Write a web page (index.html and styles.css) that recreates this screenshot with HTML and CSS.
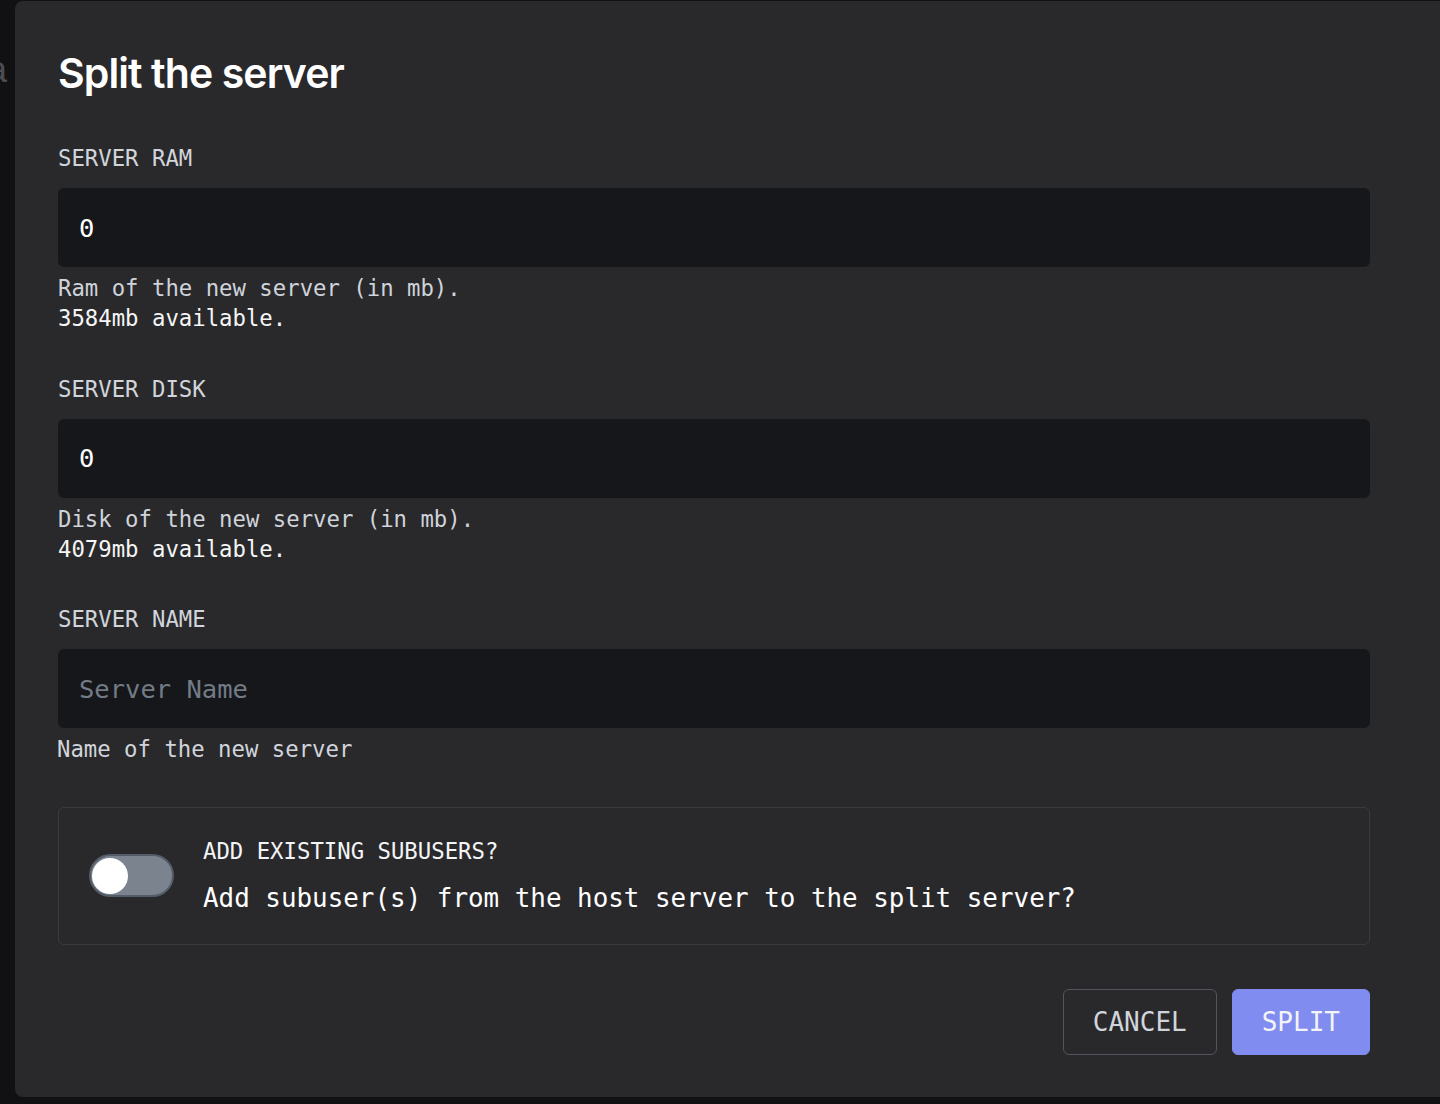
FILE: index.html
```html
<!DOCTYPE html>
<html lang="en">
<head>
<meta charset="utf-8">
<title>Split the server</title>
<link rel="stylesheet" href="styles.css">
</head>
<body>
<div class="backdrop-text">a</div>
<div class="modal">
  <div class="content">
    <h1 class="title">Split the server</h1>
    <div class="fields">
      <div class="field">
        <label class="label">SERVER RAM</label>
        <div class="input"><span class="value">0</span></div>
        <div class="help">
          <div class="help-line">Ram of the new server (in mb).</div>
          <div class="help-line strong">3584mb available.</div>
        </div>
      </div>
      <div class="field">
        <label class="label">SERVER DISK</label>
        <div class="input"><span class="value">0</span></div>
        <div class="help">
          <div class="help-line">Disk of the new server (in mb).</div>
          <div class="help-line strong">4079mb available.</div>
        </div>
      </div>
      <div class="field">
        <label class="label">SERVER NAME</label>
        <div class="input"><span class="placeholder">Server Name</span></div>
        <div class="help">
          <div class="help-line name">Name of the new server</div>
        </div>
      </div>
    </div>
    <div class="switch-box">
      <div class="toggle"><div class="knob"></div></div>
      <div class="switch-text">
        <div class="switch-title">ADD EXISTING SUBUSERS?</div>
        <div class="switch-desc">Add subuser(s) from the host server to the split server?</div>
      </div>
    </div>
    <div class="actions">
      <button class="btn btn-cancel">CANCEL</button>
      <button class="btn btn-split">SPLIT</button>
    </div>
  </div>
</div>
</body>
</html>
```
FILE: styles.css
```css
html, body {
  margin: 0;
  padding: 0;
}
body {
  background: #111113;
  overflow: hidden;
  height: 1104px;
  position: relative;
  font-family: "DejaVu Sans Mono", "Liberation Mono", monospace;
}
.backdrop-text {
  position: absolute;
  left: -13px;
  top: 50px;
  font-family: "Liberation Sans", Arial, sans-serif;
  font-size: 36px;
  line-height: 40px;
  color: #4d4d51;
}
.modal {
  position: relative;
  margin: 1px 0 0 15px;
  width: 1440px;
  box-sizing: border-box;
  background: #29292c;
  border-radius: 8px;
  padding: 48px 43px 42px;
}
.content {
  width: 1312px;
}
.title {
  margin: 0 0 46.4px;
  font-family: Inter, "Liberation Sans", sans-serif;
  font-weight: 600;
  font-size: 41px;
  line-height: 48px;
  letter-spacing: -0.9px;
  color: #ffffff;
}
.fields {
  display: flex;
  flex-direction: column;
  gap: 40.5px;
}
.field {
  display: flex;
  flex-direction: column;
}
.label {
  display: block;
  font-size: 22.3px;
  line-height: 30px;
  color: #d1d5db;
}
.input {
  margin-top: 15px;
  height: 79px;
  box-sizing: border-box;
  background: #16171b;
  border-radius: 6px;
  padding: 0 21px;
  display: flex;
  align-items: center;
  font-size: 25.5px;
}
.value {
  color: #ffffff;
}
.placeholder {
  color: #737b86;
}
.help {
  margin-top: 6px;
}
.help-line {
  font-size: 22.3px;
  line-height: 30px;
  color: #cfd3da;
}
.help-line.strong {
  color: #f5f5f5;
}
.help-line.name {
  margin-left: -1px;
  color: #d1d5db;
}
.switch-box {
  margin-top: 42.6px;
  height: 138px;
  box-sizing: border-box;
  border: 1px solid #393b41;
  border-radius: 6px;
  padding: 0 30px;
  display: flex;
  align-items: center;
  gap: 29px;
}
.toggle {
  flex: none;
  width: 85px;
  height: 43px;
  box-sizing: border-box;
  border-radius: 22px;
  background: #7b838e;
  border: 2px solid #545c67;
  display: flex;
  align-items: center;
  padding-left: 1px;
}
.knob {
  width: 36px;
  height: 36px;
  border-radius: 50%;
  background: #ffffff;
}
.switch-text {
  display: flex;
  flex-direction: column;
}
.switch-title {
  font-size: 22.3px;
  line-height: 30px;
  color: #f3f4f6;
}
.switch-desc {
  margin-top: 13.6px;
  font-size: 25.9px;
  line-height: 36px;
  color: #ffffff;
}
.actions {
  margin-top: 44px;
  display: flex;
  justify-content: flex-end;
  gap: 15px;
}
.btn {
  height: 66px;
  box-sizing: border-box;
  padding: 0 29px;
  border-radius: 6px;
  font-family: "DejaVu Sans Mono", "Liberation Mono", monospace;
  font-size: 26px;
  line-height: 36px;
  cursor: pointer;
}
.btn-cancel {
  background: transparent;
  border: 1px solid #50555e;
  color: #d1d5db;
}
.btn-split {
  background: #818cf0;
  border: 1px solid #818cf0;
  color: #f3f4f6;
}
```
